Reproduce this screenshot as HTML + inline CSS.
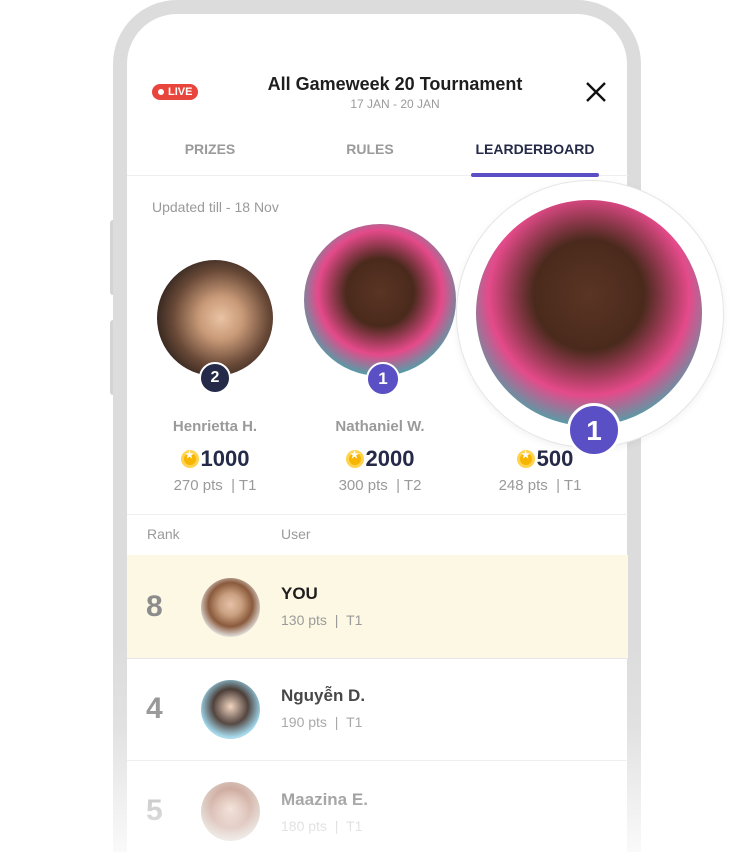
<!DOCTYPE html>
<html><head><style>
*{margin:0;padding:0;box-sizing:border-box}
html,body{width:750px;height:852px;overflow:hidden;background:#fff}
body{font-family:"Liberation Sans",sans-serif}
#w{position:relative;width:750px;height:852px;overflow:hidden}
.abs{position:absolute}
.phone{left:113px;top:0;width:528px;height:852px;border:14px solid #dcdcdc;border-bottom:none;border-radius:64px 64px 0 0;background:#fff}
.c{text-align:center}
.g{color:#9a9a9a}
.b{font-weight:bold}
.circ{border-radius:50%}
.badge{border-radius:50%;color:#fff;font-weight:bold;text-align:center;border:2px solid #fff}
.coin{display:inline-block;width:18px;height:18px;border-radius:50%;background:#f7b500;border:3px solid #ffd34d;vertical-align:-2px;margin-right:2px;position:relative}
.coin:after{content:"★";position:absolute;left:0;top:-3px;width:12px;font-size:10px;color:#fff;text-align:center}
</style></head><body><div id="w">
<div class="abs" style="left:110px;top:220px;width:6px;height:75px;background:#d4d4d4;border-radius:3px"></div>
<div class="abs" style="left:110px;top:320px;width:6px;height:75px;background:#d4d4d4;border-radius:3px"></div>
<div class="abs phone"></div>

<div class="abs" style="left:152px;top:84px;width:46px;height:16px;background:#e8463c;border-radius:8px;color:#fff;font-size:11px;font-weight:bold;line-height:16px;padding-left:16px">LIVE</div>
<div class="abs circ" style="left:158px;top:89px;width:6px;height:6px;background:#fff"></div>
<div class="abs c b" style="left:220px;top:74px;width:350px;font-size:18px;color:#1e1e1e">All Gameweek 20 Tournament</div>
<div class="abs c g" style="left:230px;top:97px;width:330px;font-size:12px">17 JAN - 20 JAN</div>
<svg class="abs" style="left:585px;top:81px" width="22" height="22"><path d="M2 2L20 20M20 2L2 20" stroke="#111" stroke-width="2.4"/></svg>

<div class="abs c b g" style="left:150px;top:141px;width:120px;font-size:14px">PRIZES</div>
<div class="abs c b g" style="left:310px;top:141px;width:120px;font-size:14px">RULES</div>
<div class="abs c b" style="left:465px;top:141px;width:140px;font-size:14px;color:#252a48">LEARDERBOARD</div>
<div class="abs" style="left:127px;top:175px;width:501px;height:1px;background:#eee"></div>
<div class="abs" style="left:471px;top:173px;width:128px;height:4px;background:#5a4fc4;border-radius:2px"></div>

<div class="abs g" style="left:152px;top:199px;font-size:14px">Updated till - 18 Nov</div>

<div class="abs circ" style="left:157px;top:260px;width:116px;height:116px;background:radial-gradient(circle at 55% 50%,#e8c3a4 0,#c99a78 25%,#6a4a38 55%,#2a1f1a 80%)"></div>
<div class="abs badge" style="left:199px;top:362px;width:32px;height:32px;background:#252a48;font-size:16px;line-height:28px">2</div>
<div class="abs circ" style="left:304px;top:224px;width:152px;height:152px;background:radial-gradient(circle at 50% 45%,#5a3424 0,#4a2a1c 30%,#e54a8a 55%,#27b8b0 80%)"></div>
<div class="abs badge" style="left:366px;top:362px;width:34px;height:34px;background:#5a4fc4;font-size:17px;line-height:30px">1</div>

<div class="abs c b g" style="left:150px;top:418px;width:130px;font-size:15px">Henrietta H.</div>
<div class="abs c b g" style="left:315px;top:418px;width:130px;font-size:15px">Nathaniel W.</div>
<div class="abs c b" style="left:150px;top:446px;width:130px;font-size:22px;color:#252a48"><span class="coin"></span>1000</div>
<div class="abs c b" style="left:315px;top:446px;width:130px;font-size:22px;color:#252a48"><span class="coin"></span>2000</div>
<div class="abs c b" style="left:480px;top:446px;width:130px;font-size:22px;color:#252a48"><span class="coin"></span>500</div>
<div class="abs c g" style="left:150px;top:477px;width:130px;font-size:15px">270 pts &nbsp;| T1</div>
<div class="abs c g" style="left:315px;top:477px;width:130px;font-size:15px">300 pts &nbsp;| T2</div>
<div class="abs c g" style="left:475px;top:477px;width:130px;font-size:15px">248 pts &nbsp;| T1</div>

<div class="abs circ" style="left:456px;top:180px;width:268px;height:268px;background:#fff;border:1px solid #e6e6e6;box-shadow:0 2px 8px rgba(0,0,0,.06)"></div>
<div class="abs circ" style="left:476px;top:200px;width:226px;height:226px;background:radial-gradient(circle at 50% 42%,#5a3424 0,#4a2a1c 32%,#e54a8a 58%,#27b8b0 82%)"></div>
<div class="abs badge" style="left:567px;top:403px;width:54px;height:54px;background:#5a4fc4;font-size:28px;line-height:50px;border-width:3px">1</div>

<div class="abs" style="left:127px;top:514px;width:501px;height:1px;background:#eee"></div>
<div class="abs g" style="left:147px;top:526px;font-size:14px">Rank</div>
<div class="abs g" style="left:281px;top:526px;font-size:14px">User</div>

<div class="abs" style="left:127px;top:555px;width:501px;height:103px;background:#fdf8e4"></div>
<div class="abs b g" style="left:146px;top:590px;font-size:30px;color:#8c8c8c">8</div>
<div class="abs circ" style="left:201px;top:578px;width:59px;height:59px;background:radial-gradient(circle at 50% 45%,#e6c0a8 0,#c9a080 25%,#8a5a3c 50%,#e8e8e8 75%)"></div>
<div class="abs b" style="left:281px;top:584px;font-size:17px;color:#1e1e1e">YOU</div>
<div class="abs g" style="left:281px;top:612px;font-size:14px">130 pts &nbsp;| &nbsp;T1</div>
<div class="abs" style="left:127px;top:658px;width:501px;height:1px;background:#e6e6e6"></div>

<div class="abs b g" style="left:146px;top:692px;font-size:30px;color:#8c8c8c">4</div>
<div class="abs circ" style="left:201px;top:680px;width:59px;height:59px;background:radial-gradient(circle at 50% 45%,#f0d0b8 0,#3a2a24 40%,#8fd0e8 70%,#f0e0a0 100%)"></div>
<div class="abs b" style="left:281px;top:686px;font-size:17px;color:#333">Nguyễn D.</div>
<div class="abs g" style="left:281px;top:714px;font-size:14px">190 pts &nbsp;| &nbsp;T1</div>
<div class="abs" style="left:127px;top:760px;width:501px;height:1px;background:#e6e6e6"></div>

<div class="abs b g" style="left:146px;top:794px;font-size:30px;color:#8c8c8c">5</div>
<div class="abs circ" style="left:201px;top:782px;width:59px;height:59px;background:radial-gradient(circle at 50% 45%,#e0b8a0 0,#a05840 45%,#c0b8a8 80%)"></div>
<div class="abs b" style="left:281px;top:790px;font-size:17px;color:#333">Maazina E.</div>
<div class="abs g" style="left:281px;top:818px;font-size:14px">180 pts &nbsp;| &nbsp;T1</div>

<div class="abs" style="left:0;top:640px;width:750px;height:212px;background:linear-gradient(rgba(255,255,255,0),rgba(255,255,255,.15) 40%,rgba(255,255,255,.85) 100%)"></div>
</div></body></html>
